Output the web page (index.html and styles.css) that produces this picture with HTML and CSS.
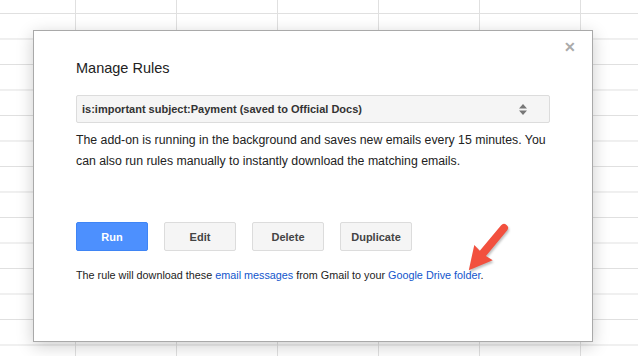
FILE: index.html
```html
<!DOCTYPE html>
<html>
<head>
	<meta charset="UTF-8">
	<title>Manage Rules</title>
	<link rel="stylesheet" href="styles.css">
</head>
<body>
	<div class="sheet">
		<div class="dialog">
			<span class="close">&#x2715;</span>
			<h1 class="title">Manage Rules</h1>

			<div class="select">
				<span>is:important subject:Payment (saved to Official Docs)</span>
				<span class="spinner">
					<svg width="8" height="11" viewBox="0 0 8 11"><path d="M4 0 L8 4.5 L0 4.5 Z M0 6.5 L8 6.5 L4 11 Z" fill="#777"/></svg>
				</span>
			</div>

			<p class="info">The add-on is running in the background and saves new emails every 15 minutes. You can also run rules manually to instantly download the matching emails.</p>

			<div class="actions">
				<button class="btn btn-run">Run</button>
				<button class="btn">Edit</button>
				<button class="btn">Delete</button>
				<button class="btn">Duplicate</button>
			</div>

			<p class="note">The rule will download these <a href="#">email messages</a> from Gmail to your <a href="#">Google Drive folder</a>.</p>

			<!-- callout arrow -->
			<svg class="arrow" width="60" height="60" viewBox="0 0 60 60">
				<g transform="translate(46 9) rotate(129.8)">
					<path d="M0 -4 L33 -4 L32 -12 L55 0 L32 12 L33 4 L0 4 A4 4 0 0 1 0 -4 Z" fill="#f2503e"/>
				</g>
			</svg>
		</div>
	</div>
</body>
</html>
```

FILE: styles.css
```css
body {
	margin: 0;
	font-family: "Liberation Sans", Arial, sans-serif;
	color: #222;
}
.sheet {
	width: 638px;
	height: 356px;
	overflow: hidden;
	padding-top: 30px;
	padding-left: 33px;
	box-sizing: border-box;
	background-color: #fff;
	background-image:
		linear-gradient(to right, #e0e0e0 1px, transparent 1px),
		linear-gradient(to bottom, #e0e0e0 1px, transparent 1px);
	background-size: 101px 25.5px;
	background-position: 75px 13px;
}
.dialog {
	position: relative;
	width: 560px;
	height: 312px;
	box-sizing: border-box;
	padding: 28px 42px 0 42px;
	background: #fff;
	border: 1px solid #a9a9a9;
	box-shadow: 0 4px 16px rgba(0, 0, 0, 0.2);
}
.close {
	position: absolute;
	top: 8px;
	right: 16px;
	font-size: 14px;
	font-weight: bold;
	color: #aaa;
}
.title {
	margin: 0;
	font-size: 14.5px;
	line-height: 18px;
	font-weight: normal;
	color: #222;
}
.select {
	margin-top: 18px;
	width: 474px;
	height: 28px;
	box-sizing: border-box;
	display: flex;
	align-items: center;
	justify-content: space-between;
	padding: 0 22px 0 5px;
	background: #f5f5f5;
	border: 1px solid #dcdcdc;
	border-radius: 2px;
	font-size: 11px;
	font-weight: bold;
	color: #333;
}
.spinner {
	display: flex;
}
.info {
	margin: 7px 0 0 0;
	font-size: 12.3px;
	line-height: 21px;
	color: #222;
}
.actions {
	margin-top: 50px;
	display: flex;
	gap: 16px;
}
.btn {
	width: 72px;
	height: 29px;
	border: 1px solid #dcdcdc;
	border-radius: 2px;
	background: #f5f5f5;
	color: #444;
	font-family: inherit;
	font-size: 11px;
	font-weight: bold;
	cursor: pointer;
}
.btn-run {
	background: #4d90fe;
	border-color: #3f85f5;
	color: #fff;
}
.note {
	margin: 17px 0 0 0;
	font-size: 10.8px;
	line-height: 14px;
	color: #222;
}
.note a {
	color: #1155cc;
	text-decoration: none;
}
.arrow {
	position: absolute;
	left: 424px;
	top: 188px;
	filter: drop-shadow(1px 2px 1px rgba(0, 0, 0, 0.25));
}
```
